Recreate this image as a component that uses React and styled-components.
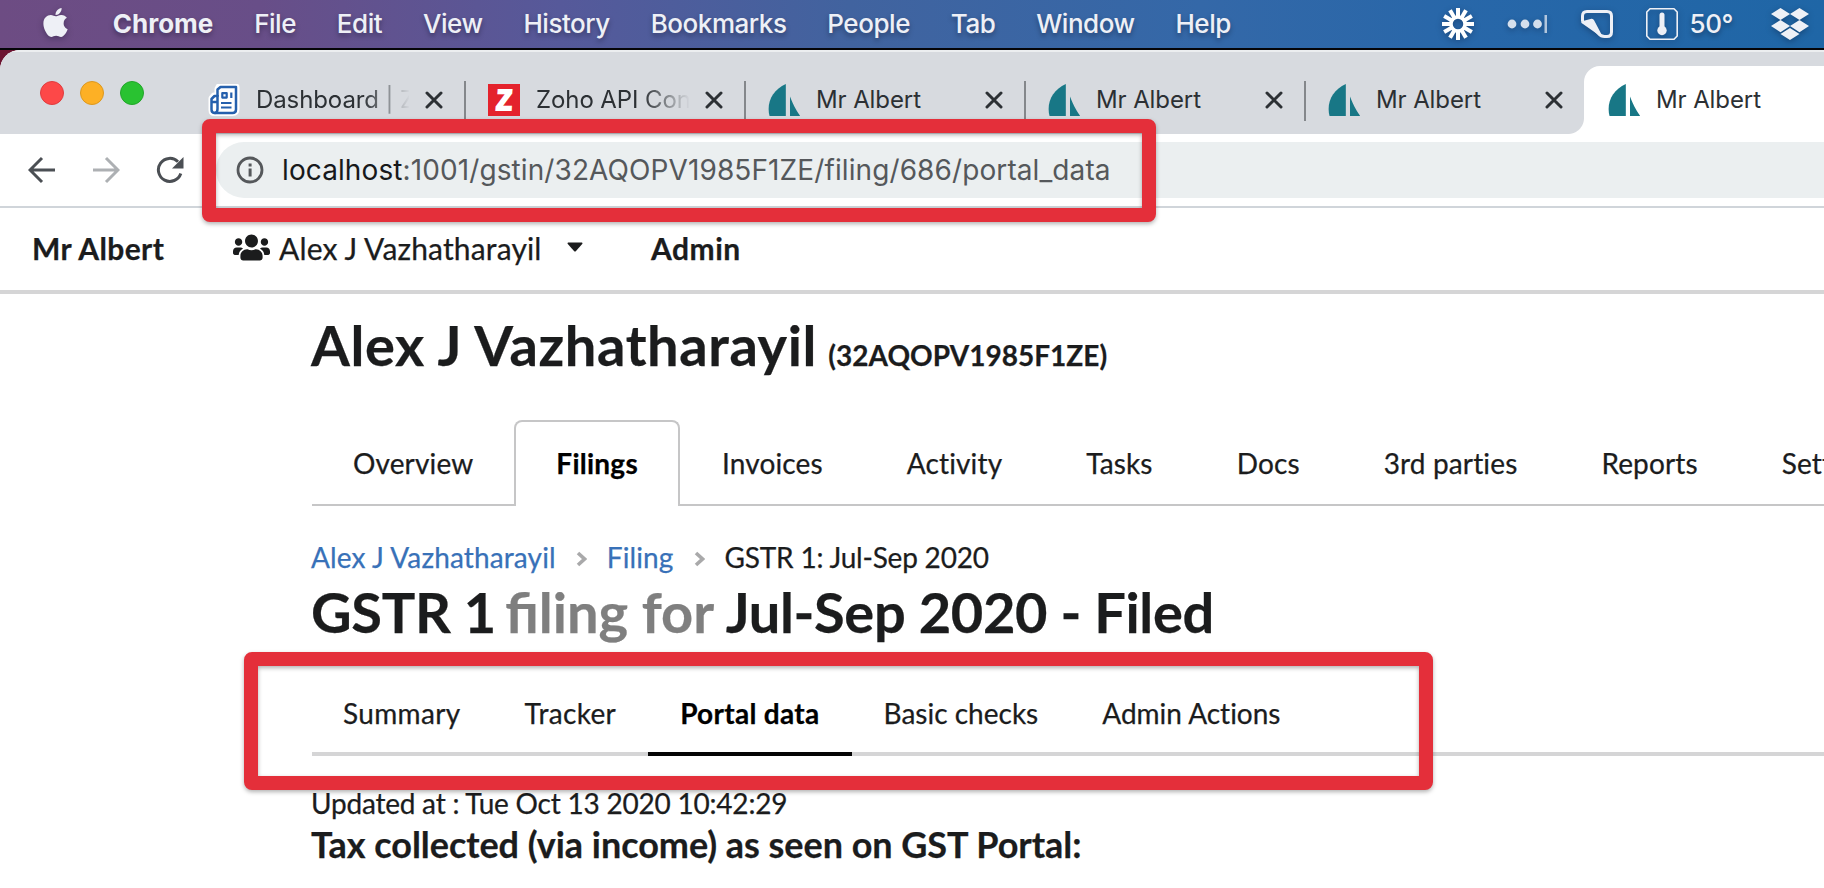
import React from "react";
import styled, { createGlobalStyle, css } from "styled-components";
import { FaApple, FaDropbox, FaUsers } from "react-icons/fa";

const GlobalStyle = createGlobalStyle`
  * { box-sizing: border-box; }
  body { margin: 0; background: #fff; overflow: hidden; }
`;

const uiFont = `"Inter", "Liberation Sans", sans-serif`;
const pageFont = `"Lato", "Liberation Sans", sans-serif`;

const Screen = styled.div`
  position: relative;
  width: 1824px;
  height: 888px;
  overflow: hidden;
  background: linear-gradient(90deg, #6b1330 0, #6b1330 30px, #000 60px);
  white-space: nowrap;
`;

/* ---------- macOS menu bar ---------- */

const MenuBar = styled.header`
  display: flex;
  align-items: center;
  justify-content: space-between;
  height: 50px;
  padding: 0 15px 0 39px;
  border-bottom: 2px solid #050508;
  background: linear-gradient(90deg, #6d4c83 0, #684e88 260px, #56599a 560px, #41639f 850px, #3468a8 1200px, #2867a9 1450px, #1f66a6 1824px);
  color: #eef0f6;
  font-family: ${uiFont};
  svg { display: block; filter: drop-shadow(0 2px 3px rgba(0, 0, 20, 0.3)); }
`;

const MenuGroup = styled.nav`
  display: flex;
  align-items: center;
  gap: 40.8px;
  > svg { margin-top: -4px; }
`;

const MenuItem = styled.span`
  font-size: 26px;
  line-height: 46px;
  font-weight: ${(p) => (p.$app ? 700 : 500)};
  letter-spacing: ${(p) => (p.$app ? "0" : "-0.45px")};
  text-shadow: 0 3px 5px rgba(0, 0, 20, 0.35);
`;

const StatusGroup = styled.div`
  display: flex;
  align-items: center;
  gap: 33px;
`;

const Temperature = styled.div`
  display: flex;
  align-items: center;
  gap: 12px;
  margin-right: 5px;
`;

/* ---------- browser window ---------- */

const BrowserWindow = styled.main`
  height: 838px;
  border-radius: 20px 0 0 0;
  overflow: hidden;
  background: #fff;
`;

const TabStrip = styled.div`
  display: flex;
  height: 84px;
  padding-top: 16px;
  background: #d7dadf;
  box-shadow: inset 0 2px 0 #eceef0;
  font-family: ${uiFont};
`;

const WindowControls = styled.div`
  display: flex;
  flex: none;
  gap: 16px;
  width: 185px;
  padding: 15px 0 0 40px;
`;

const Light = styled.i`
  width: 24px;
  height: 24px;
  flex: none;
  border-radius: 50%;
  background: ${(p) => p.$color};
  border: 1px solid ${(p) => p.$edge};
`;

const TabBox = styled.div`
  position: relative;
  display: flex;
  align-items: center;
  width: 280px;
  flex: none;
  padding-left: 23px;
  color: #2c3034;
  ${(p) =>
    p.$active
      ? css`
          margin-left: -1px;
          padding-left: 24px;
          background: #fff;
          border-radius: 16px 0 0 0;
          &::before {
            content: "";
            position: absolute;
            left: -16px;
            bottom: 0;
            width: 16px;
            height: 16px;
            background: radial-gradient(circle at 0 0, transparent 15.5px, #fff 16.5px);
          }
        `
      : ""}
  ${(p) =>
    p.$divider
      ? css`
          &::after {
            content: "";
            position: absolute;
            right: -1px;
            top: 15px;
            width: 2px;
            height: 40px;
            background: #84878b;
          }
        `
      : ""}
`;

const TabTitle = styled.span`
  width: 153px;
  margin-left: 16px;
  overflow: hidden;
  font-size: 24px;
  line-height: 32px;
  letter-spacing: -0.1px;
  ${(p) => p.$fade && css`mask-image: linear-gradient(90deg, #000 106px, transparent 154px);`}
`;

const CloseIcon = styled.svg`
  margin-left: 16px;
  width: 18px;
  height: 18px;
  flex: none;
`;

const ZohoMark = styled.span`
  display: flex;
  align-items: center;
  justify-content: center;
  width: 32px;
  height: 32px;
  flex: none;
  background: #e4222c;
  color: #fff;
  font: italic 700 29px/32px "Liberation Sans Narrow", "Liberation Sans", sans-serif;
  -webkit-text-stroke: 2px #fff;
`;

const ZohoLetter = styled.span`
  transform: scaleX(0.9) skewX(7deg);
`;

const Toolbar = styled.div`
  display: flex;
  align-items: center;
  height: 74px;
  padding-left: 28px;
  border-bottom: 2px solid #d0d5da;
  background: #fff;
  svg { flex: none; }
`;

const NavButtons = styled.div`
  display: flex;
  align-items: center;
  gap: 36px;
  width: 188px;
`;

const AddressBar = styled.div`
  display: flex;
  align-items: center;
  flex: 1;
  height: 56px;
  padding-left: 20px;
  border-radius: 28px 0 0 28px;
  background: #ebeff0;
`;

const Url = styled.span`
  margin-left: 18px;
  font-family: ${uiFont};
  font-size: 28px;
  color: #55585b;
  letter-spacing: 0.1px;
  b { font-weight: 400; color: #17191b; }
`;

/* ---------- web application ---------- */

const AppNav = styled.nav`
  display: flex;
  align-items: center;
  height: 86px;
  padding: 0 0 4px 32px;
  border-bottom: 4px solid #d5d5d6;
  color: #1b1c1d;
  font-family: ${pageFont};
  font-size: 30px;
  line-height: 36px;
  -webkit-text-stroke: 0.25px currentColor;
`;

const Brand = styled.span`
  width: 201px;
  padding-top: 1px;
  font-weight: 700;
  letter-spacing: 0.4px;
`;

const ClientPicker = styled.div`
  display: flex;
  align-items: center;
  width: 418px;
  > svg:first-child { margin-top: 1px; }
`;

const ClientName = styled.span`
  margin: 1px 25px 0 9px;
  letter-spacing: 0.16px;
`;

const AdminLink = styled.span`
  padding-top: 1px;
  font-weight: 700;
  letter-spacing: 0.5px;
`;

const Content = styled.section`
  padding: 14px 0 0 311px;
  color: #1b1c1d;
  font-family: ${pageFont};
  font-size: 28px;
  font-variant-ligatures: none;
  -webkit-text-stroke: 0.25px currentColor;
`;

const PageTitle = styled.h1`
  margin: 0;
  padding-top: 1px;
  height: 112px;
  font-size: 56px;
  line-height: 72px;
  letter-spacing: 0.6px;
  small { margin-left: -3px; font-size: 28px; letter-spacing: 0.02px; }
`;

const TabBar = styled.div`
  display: flex;
  height: 86px;
  margin-left: 1px;
  border-bottom: 2px solid #c6c6c7;
`;

const SectionTab = styled.span`
  height: 86px;
  flex: none;
  padding: 27px 40px 0;
  line-height: 28px;
  letter-spacing: 0.14px;
  border: 2px solid transparent;
  border-bottom: 0;
  &:first-child { margin-left: -1px; }
  ${(p) =>
    p.$active &&
    css`
      margin-left: -1px;
      color: #000;
      font-weight: 700;
      letter-spacing: 0.25px;
      background: #fff;
      border-color: #c6c6c7;
      border-radius: 8px 8px 0 0;
    `}
`;

const Breadcrumb = styled.div`
  display: flex;
  align-items: center;
  height: 39px;
  margin-top: 31px;
  line-height: 40px;
  a { color: #3871b8; letter-spacing: 0.13px; }
  svg { margin: 4px 20px 0; }
`;

const CurrentCrumb = styled.span`
  letter-spacing: -0.2px;
`;

const FilingTitle = styled.h1`
  margin: 0;
  font-size: 56px;
  line-height: 72px;
  letter-spacing: -0.35px;
`;

const FilingFor = styled.span`
  margin: 0 0 0 -4px;
  color: #7f7f7f;
  letter-spacing: 0;
  font-variant-ligatures: normal;
`;

const SubMenu = styled.div`
  display: flex;
  align-items: flex-end;
  height: 108px;
  margin-left: 1px;
  border-bottom: 4px solid #d5d5d6;
`;

const SubMenuItem = styled.span`
  height: 57px;
  margin-bottom: -4px;
  padding: 0 32px;
  line-height: 28px;
  letter-spacing: ${(p) => (p.$active ? "0.3px" : p.$loose ? "0.35px" : "0")};
  border-bottom: 4px solid transparent;
  &:first-child { margin-left: -1px; }
  ${(p) => p.$active && css`color: #000; font-weight: 700; border-color: #050505;`}
`;

const Updated = styled.p`
  margin: 28px 0 0;
  line-height: 38px;
  letter-spacing: -0.22px;
`;

const TaxHeading = styled.h3`
  margin: 0;
  font-size: 36px;
  line-height: 44px;
  letter-spacing: -0.04px;
`;

/* Red callout frame laid over the screen. */
const Callout = styled.div`
  position: absolute;
  left: ${(p) => p.$x}px;
  top: ${(p) => p.$y}px;
  width: ${(p) => p.$w}px;
  height: ${(p) => p.$h}px;
  border: 14px solid #e42f3a;
  border-radius: 8px;
  filter: drop-shadow(0 2px 2px rgba(0, 0, 0, 0.3));
`;

/* ---------- icons ---------- */

const Burst = () => (
  <svg width="32" height="32" viewBox="-16 -16 32 32">
    {Array.from({ length: 12 }, (_, i) => (
      <path key={i} d="M0 -6V-16" stroke="#fff" strokeWidth="4" transform={`rotate(${i * 30})`} />
    ))}
    <circle r="7" fill="none" stroke="#fff" strokeWidth="3.5" />
  </svg>
);

const Dots = () => (
  <svg width="41" height="20" viewBox="0 0 41 20" fill="currentColor" opacity=".88">
    <circle cx="5" cy="10" r="4.4" />
    <circle cx="18" cy="10" r="4.4" />
    <circle cx="30.5" cy="10" r="4.4" />
    <path d="M37.500 1h2.500v18h-2.500z" opacity=".8" />
  </svg>
);

const Flap = () => (
  <svg width="32" height="28" viewBox="0 0 32 28">
    <path
      d="M1.5 11.5V6Q1.5 1.5 6 1.5H26Q30.5 1.5 30.5 6V22Q30.5 26.5 26 26.5H23.5Q20 26.5 17.5 23.5L14 20"
      fill="none"
      stroke="currentColor"
      strokeWidth="3"
    />
    <path d="M0 11.5L10.5 8.8Q12.3 8.6 13.2 10.4L19.5 22.5L21 27Q18 26 15.5 23.6L2 14Q0 13 0 11.5Z" fill="currentColor" />
  </svg>
);

const Thermometer = () => (
  <svg width="32" height="32" viewBox="0 0 32 32">
    <path d="M4 .8H28L31.2 4V28L28 31.2H4L.8 28V4Z" fill="none" stroke="currentColor" strokeWidth="1.6" strokeLinejoin="round" />
    <path d="M16 7V22" stroke="currentColor" strokeWidth="5" strokeLinecap="round" />
    <circle cx="16" cy="22.5" r="4.7" fill="currentColor" />
  </svg>
);

const NewspaperIcon = () => (
  <svg width="32" height="32" viewBox="0 0 32 32" fill="none" strokeLinejoin="round">
    <path d="M11 3H28V25Q28 28.500 24.500 28.500H6.500Q4 28.500 4 26V14.500L6 12H10V5Z" fill="#fff" stroke="#fff" strokeWidth="7" />
    <path d="M9.500 5.500L12.500 3H28V25.500Q28 29 24.500 29H7Q3.500 29 3.500 25.500V15L6.500 12H9.500Z" stroke="#2560ad" strokeWidth="2.500" />
    <path d="M9.500 11V25Q9.500 29 6.500 29M4 18H9" stroke="#2560ad" strokeWidth="2.500" />
    <path d="M14.300 9.200H18.700V13.600H14.300ZM23.300 8.500V14M13 19H23.500M13 23.500H23.500" stroke="#2560ad" strokeWidth="2.200" />
  </svg>
);

const SailIcon = () => (
  <svg width="32" height="32" viewBox="0 0 32 32" fill="#187786">
    <path d="M17.8 0C7 5 .6 14 .6 25Q.6 29 1.6 32H17.8Z" />
    <path d="M22 12.5C24.5 19.500 28 26 32.200 32H22Z" />
  </svg>
);

const Close = () => (
  <CloseIcon viewBox="0 0 18 18">
    <path d="M2 2L16 16M16 2L2 16" stroke="#2c3034" strokeWidth="3" strokeLinecap="round" />
  </CloseIcon>
);

const ArrowIcon = ({ forward }) => (
  <svg width="28" height="28" viewBox="0 0 28 28" fill="none" stroke={forward ? "#adb0b3" : "#4b4f54"} strokeWidth="3">
    <path d={forward ? "M1 14H26M14 2L26 14L14 26" : "M27 14H2M14 2L2 14L14 26"} />
  </svg>
);

const ReloadIcon = () => (
  <svg width="28" height="28" viewBox="0 0 28 28">
    <path d="M24.800 17.500A11.500 11.500 0 1 1 22 5.700" fill="none" stroke="#4b4f54" strokeWidth="3" />
    <path d="M27.500 1V12.500H16Z" fill="#4b4f54" />
  </svg>
);

const InfoIcon = () => (
  <svg width="28" height="28" viewBox="0 0 28 28">
    <circle cx="14" cy="14" r="12" fill="none" stroke="#55585b" strokeWidth="2.8" />
    <path d="M12.600 7.500h3v3h-3zM12.600 12.500h3v8h-3z" fill="#55585b" />
  </svg>
);

const Caret = () => (
  <svg width="16" height="10" viewBox="0 0 16 10">
    <path d="M1 .5H15Q16 1 15.200 2L9 9Q8 10 7 9L.8 2Q0 1 1 .5Z" fill="#1b1c1d" />
  </svg>
);

const Chevron = () => (
  <svg width="11" height="16" viewBox="0 0 11 16">
    <path d="M2 2L8.500 8L2 14" fill="none" stroke="#a9a9aa" strokeWidth="3.600" strokeLinecap="butt" />
  </svg>
);

/* ---------- data ---------- */

const menus = ["File", "Edit", "View", "History", "Bookmarks", "People", "Tab", "Window", "Help"];

const browserTabs = [
  { title: "Dashboard | Zoho", icon: <NewspaperIcon />, fade: true },
  { title: "Zoho API Console", icon: <ZohoMark><ZohoLetter>Z</ZohoLetter></ZohoMark>, fade: true },
  { title: "Mr Albert", icon: <SailIcon /> },
  { title: "Mr Albert", icon: <SailIcon /> },
  { title: "Mr Albert", icon: <SailIcon /> },
  { title: "Mr Albert", icon: <SailIcon />, active: true },
];

const sections = ["Overview", "Filings", "Invoices", "Activity", "Tasks", "Docs", "3rd parties", "Reports", "Settings"];
const filingViews = ["Summary", "Tracker", "Portal data", "Basic checks", "Admin Actions"];

export default function App() {
  return (
    <Screen>
      <GlobalStyle />
      <MenuBar>
        <MenuGroup>
          <FaApple size={33} />
          <MenuItem $app>Chrome</MenuItem>
          {menus.map((m) => (
            <MenuItem key={m}>{m}</MenuItem>
          ))}
        </MenuGroup>
        <StatusGroup>
          <Burst />
          <Dots />
          <Flap />
          <Temperature>
            <Thermometer />
            <MenuItem>50°</MenuItem>
          </Temperature>
          <FaDropbox size={38} />
        </StatusGroup>
      </MenuBar>

      <BrowserWindow>
        <TabStrip>
          <WindowControls>
            <Light $color="#fd4848" $edge="#e03c3e" />
            <Light $color="#fdb025" $edge="#dc981f" />
            <Light $color="#29c231" $edge="#22a62a" />
          </WindowControls>
          {browserTabs.map((t, i) => (
            <TabBox key={i} $active={t.active} $divider={i < 4}>
              {t.icon}
              <TabTitle $fade={t.fade}>{t.title}</TabTitle>
              {!t.active && <Close />}
            </TabBox>
          ))}
        </TabStrip>

        <Toolbar>
          <NavButtons>
            <ArrowIcon />
            <ArrowIcon forward />
            <ReloadIcon />
          </NavButtons>
          <AddressBar>
            <InfoIcon />
            <Url>
              <b>localhost</b>:1001/gstin/32AQOPV1985F1ZE/filing/686/portal_data
            </Url>
          </AddressBar>
        </Toolbar>

        <AppNav>
          <Brand>Mr Albert</Brand>
          <ClientPicker>
            <FaUsers size={37} />
            <ClientName>Alex J Vazhatharayil</ClientName>
            <Caret />
          </ClientPicker>
          <AdminLink>Admin</AdminLink>
        </AppNav>

        <Content>
          <PageTitle>
            Alex J Vazhatharayil <small>(32AQOPV1985F1ZE)</small>
          </PageTitle>
          <TabBar>
            {sections.map((s) => (
              <SectionTab key={s} $active={s === "Filings"}>
                {s}
              </SectionTab>
            ))}
          </TabBar>
          <Breadcrumb>
            <a>Alex J Vazhatharayil</a>
            <Chevron />
            <a>Filing</a>
            <Chevron />
            <CurrentCrumb>GSTR 1: Jul-Sep 2020</CurrentCrumb>
          </Breadcrumb>
          <FilingTitle>
            GSTR 1 <FilingFor>filing for</FilingFor> Jul-Sep 2020 - Filed
          </FilingTitle>
          <SubMenu>
            {filingViews.map((v) => (
              <SubMenuItem key={v} $active={v === "Portal data"} $loose={v === "Summary" || v === "Tracker"}>
                {v}
              </SubMenuItem>
            ))}
          </SubMenu>
          <Updated>Updated at : Tue Oct 13 2020 10:42:29</Updated>
          <TaxHeading>Tax collected (via income) as seen on GST Portal:</TaxHeading>
        </Content>
      </BrowserWindow>

      <Callout $x={202} $y={119} $w={954} $h={103} />
      <Callout $x={244} $y={652} $w={1189} $h={138} />
    </Screen>
  );
}
